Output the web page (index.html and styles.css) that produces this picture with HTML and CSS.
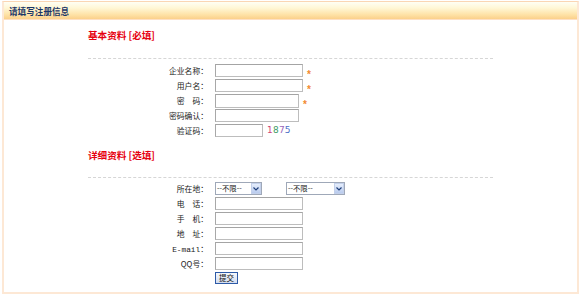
FILE: index.html
```html
<!DOCTYPE html>
<html lang="zh-CN">
<head>
<meta charset="utf-8">
<title>请填写注册信息</title>
<link rel="stylesheet" href="styles.css">
</head>
<body>
<div class="frame">
  <div class="head"><span class="head-title">请填写注册信息</span></div>
  <div class="body">
    <h2 class="sec">基本资料 [必填]</h2>
    <div class="rule"></div>
    <div class="rows">
      <div class="row"><label class="lbl">企业名称：</label><input class="inp" type="text"><span class="star">*</span></div>
      <div class="row"><label class="lbl">用户名：</label><input class="inp" type="text"><span class="star">*</span></div>
      <div class="row"><label class="lbl">密　码：</label><input class="inp w84 pw" type="password"><span class="star">*</span></div>
      <div class="row"><label class="lbl">密码确认：</label><input class="inp w84" type="password"></div>
      <div class="row"><label class="lbl">验证码：</label><input class="inp w48" type="text"><span class="code"><span class="c1">1</span><span class="c2">8</span><span class="c3">7</span><span class="c4">5</span></span></div>
    </div>

    <h2 class="sec sec2">详细资料 [选填]</h2>
    <div class="rule rule2"></div>
    <div class="rows rows2">
      <div class="row"><label class="lbl">所在地：</label>
        <div class="sel"><span class="sel-text">--不限--</span><span class="sel-btn"><svg width="6" height="4" viewBox="0 0 6 4"><path d="M0.5 0.5 L3 3 L5.5 0.5" fill="none" stroke="#1f3f7a" stroke-width="1.2"/></svg></span></div>
        <div class="sel sel-wide"><span class="sel-text">--不限--</span><span class="sel-btn"><svg width="6" height="4" viewBox="0 0 6 4"><path d="M0.5 0.5 L3 3 L5.5 0.5" fill="none" stroke="#1f3f7a" stroke-width="1.2"/></svg></span></div>
      </div>
      <div class="row"><label class="lbl">电　话：</label><input class="inp" type="text"></div>
      <div class="row"><label class="lbl">手　机：</label><input class="inp" type="text"></div>
      <div class="row"><label class="lbl">地　址：</label><input class="inp" type="text"></div>
      <div class="row"><label class="lbl"><span class="mono">E-mail</span>：</label><input class="inp" type="text"></div>
      <div class="row"><label class="lbl">QQ号：</label><input class="inp" type="text"></div>
      <div class="btn-row"><button class="btn" type="button">提交</button></div>
    </div>
  </div>
</div>
</body>
</html>
```
FILE: styles.css
```css
* { box-sizing: border-box; }
html, body { margin: 0; padding: 0; background: #fff; }
body { font-family: "Noto Sans CJK SC", "Noto Sans", sans-serif; color: #222; }

.frame {
  margin: 1px 1px 0 2px;
  height: 293px;
  border: 2px solid #fde8d5;
  border-top: 1px solid #fad6b4;
}

.head {
  height: 18px;
  display: flex;
  align-items: center;
  padding-left: 5px;
  background: linear-gradient(#fffff4, #fff7d6 35%, #fee2a6 75%, #fbd08a);
  border-bottom: 1px solid #fde0c4;
}
.head-title {
  font-size: 8.6px;
  line-height: 10px;
  font-weight: bold;
  color: #1a3668;
}

.body { padding-left: 84px; }

.sec {
  margin: 9px 0 0;
  font-size: 9.6px;
  line-height: 12px;
  font-weight: bold;
  color: #e6000f;
}
.sec2 { margin-top: 10px; }

.rule {
  width: 405px;
  border-top: 1px dashed #d6d6d6;
  margin-top: 17px;
}
.rule2 { margin-top: 16px; }

.rows { margin-top: 5px; }
.rows2 { margin-top: 4px; }

.row {
  display: flex;
  align-items: flex-start;
  height: 15px;
}
.lbl {
  width: 120px;
  margin-right: 7px;
  text-align: right;
  font-size: 7.8px;
  line-height: 13px;
  color: #222;
  white-space: nowrap;
}
.mono { font-family: "Liberation Mono", "DejaVu Sans Mono", monospace; font-size: 7.8px; }

.inp {
  width: 88px;
  height: 13px;
  margin: 0;
  padding: 0;
  border: 1px solid #bdbdbd;
  border-top-color: #a4a4a4;
  border-left-color: #a8a8a8;
  background: #fff;
  outline: none;
}
.w84 { width: 84px; }
.pw { height: 14px; }
.w48 { width: 48px; }

.star {
  margin-left: 4px;
  margin-top: 6px;
  font-size: 10px;
  line-height: 10px;
  font-weight: bold;
  color: #f28a2e;
  font-family: "Liberation Sans", sans-serif;
}

.code {
  margin-left: 4px;
  font-family: "DejaVu Sans", sans-serif;
  font-size: 9px;
  line-height: 13px;
  letter-spacing: 0.2px;
}
.c1 { color: #d0457a; }
.c2 { color: #3b9a63; }
.c3 { color: #9a63b8; }
.c4 { color: #4a6fc8; }

.sel {
  display: flex;
  width: 47px;
  height: 13px;
  border: 1px solid #9fa8b8;
  background: #fff;
}
.sel-wide { width: 59px; margin-left: 24px; }
.sel-text {
  flex: 1;
  padding-left: 1px;
  font-size: 7.3px;
  line-height: 11px;
  color: #222;
  white-space: nowrap;
}
.sel-btn {
  width: 10px;
  display: flex;
  align-items: center;
  justify-content: center;
  background: linear-gradient(#e6eefc, #b9cbee);
  border: 1px solid #c3d0ea;
}

.btn-row { display: flex; padding-left: 127px; }
.btn {
  width: 23px;
  height: 12px;
  margin: 0;
  padding: 0;
  border: 1px solid #2d5aa7;
  background: linear-gradient(#f6f8fc, #d3ddf0);
  font-family: "Noto Sans CJK SC", sans-serif;
  font-size: 7.5px;
  line-height: 10px;
  color: #111;
  text-align: center;
}
```
